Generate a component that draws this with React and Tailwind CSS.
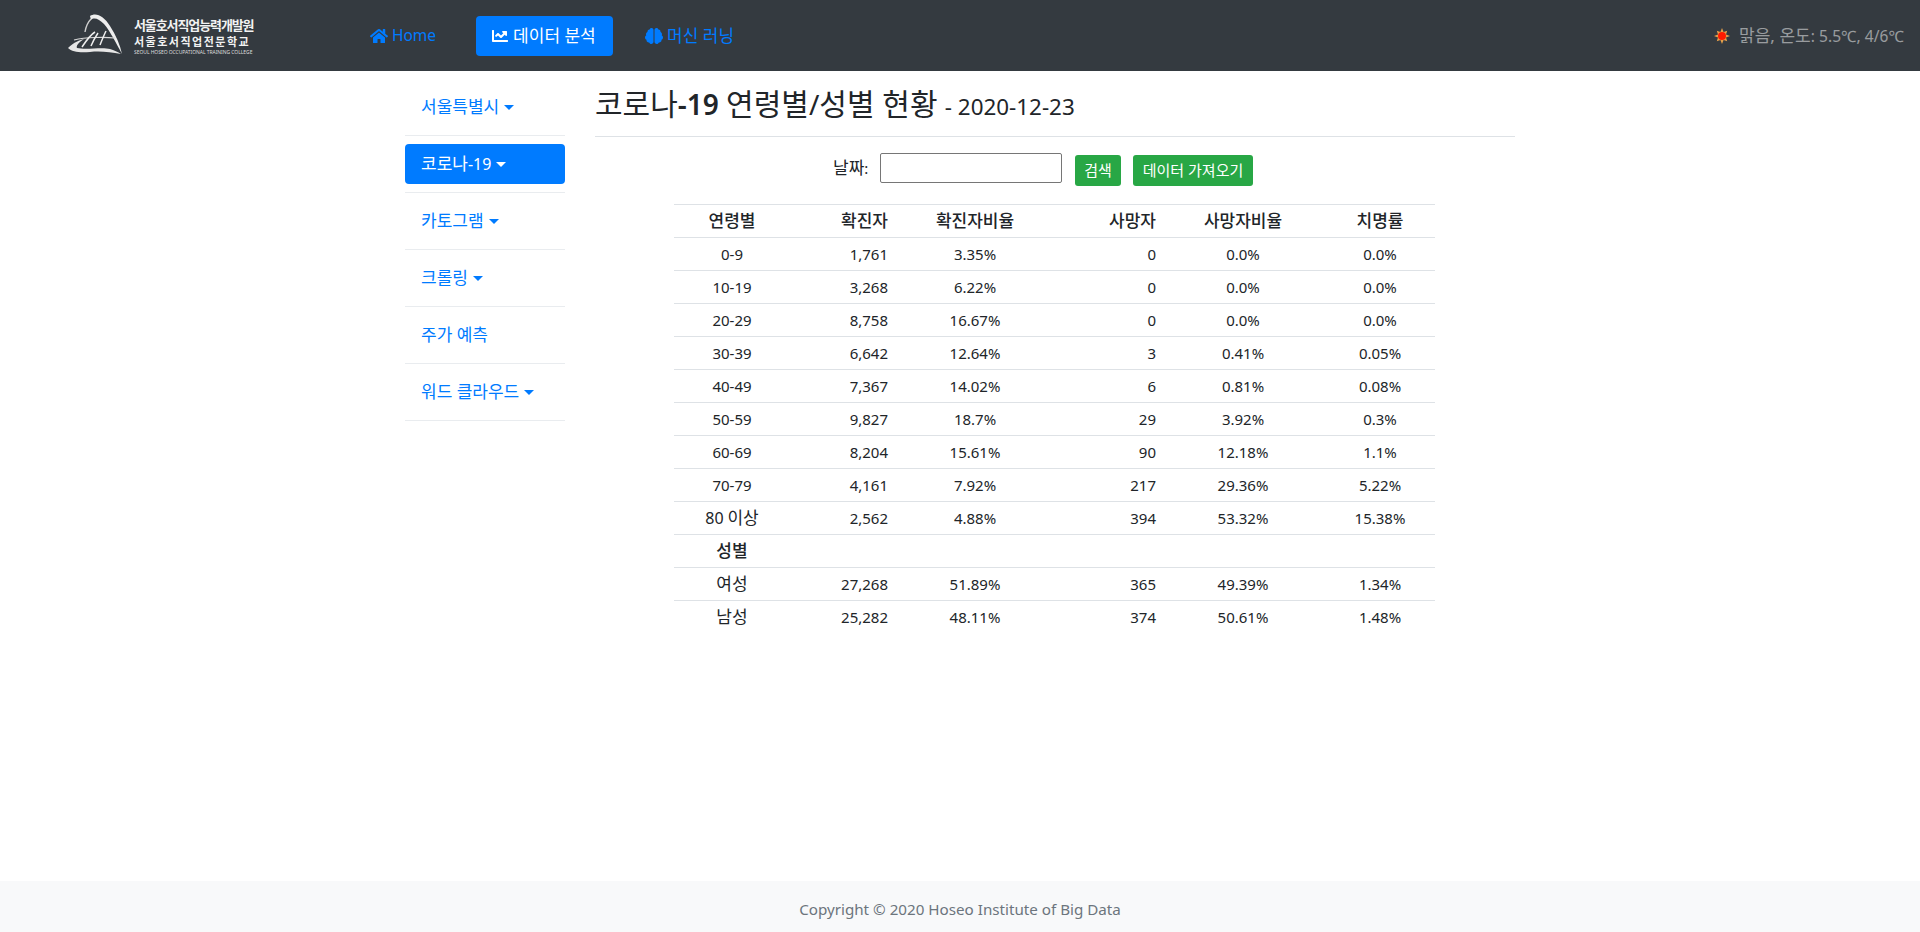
import React from "react";
import { FaHome, FaChartLine, FaBrain } from "react-icons/fa";

function K({ children }) {
  return <span className="text-[17px]">{children}</span>;
}
function L({ children }) {
  return <span className="text-[16px]">{children}</span>;
}

const rows = [
  ["0-9", "1,761", "3.35%", "0", "0.0%", "0.0%"],
  ["10-19", "3,268", "6.22%", "0", "0.0%", "0.0%"],
  ["20-29", "8,758", "16.67%", "0", "0.0%", "0.0%"],
  ["30-39", "6,642", "12.64%", "3", "0.41%", "0.05%"],
  ["40-49", "7,367", "14.02%", "6", "0.81%", "0.08%"],
  ["50-59", "9,827", "18.7%", "29", "3.92%", "0.3%"],
  ["60-69", "8,204", "15.61%", "90", "12.18%", "1.1%"],
  ["70-79", "4,161", "7.92%", "217", "29.36%", "5.22%"],
  [<><L>80</L> <K>이상</K></>, "2,562", "4.88%", "394", "53.32%", "15.38%"],
];
const rows2 = [
  [<K>여성</K>, "27,268", "51.89%", "365", "49.39%", "1.34%"],
  [<K>남성</K>, "25,282", "48.11%", "374", "50.61%", "1.48%"],
];
const side = [
  [<K>서울특별시</K>, true],
  [<><K>코로나</K><L>-19</L></>, true, true],
  [<K>카토그램</K>, true],
  [<K>크롤링</K>, true],
  [<K>주가 예측</K>, false],
  [<K>워드 클라우드</K>, true],
];

const cellBase = "border-t border-[#dee2e6] h-[33px] p-0";

function Row({ r, bold }) {
  return (
    <tr className={bold ? "font-medium" : ""}>
      <td className={cellBase + " text-center"}>{r[0]}</td>
      <td className={cellBase + " text-right pr-[12px]"}>{r[1]}</td>
      <td className={cellBase + " text-center"}>{r[2]}</td>
      <td className={cellBase + " text-right pr-[5px]"}>{r[3]}</td>
      <td className={cellBase + " text-center"}>{r[4]}</td>
      <td className={cellBase + " text-center"}>{r[5]}</td>
    </tr>
  );
}

function Caret() {
  return <span className="inline-block ml-[5px] w-0 h-0 border-t-[5px] border-x-[5px] border-x-transparent border-t-current" />;
}

export default function App() {
  return (
    <div className="min-h-[932px] flex flex-col bg-white text-[#212529] text-[15px] font-['Noto_Sans','Noto_Sans_CJK_KR',sans-serif]">
      <nav className="h-[71px] bg-[#343a40] flex items-center shrink-0">
        <div className="w-[354px] pl-[66px] flex items-center gap-[6px] shrink-0">
          <svg width="62" height="46" viewBox="0 0 62 46" className="shrink-0">
            <path d="M24 3 C30 -1 38 3 44 13 C50 22 54 32 56 41 C50 30 44 18 38 11 C33 6 28 4 25 7 Z" fill="#eeeeee" />
            <path d="M25 6 C22 9 20 13 19 19" stroke="#cfcfcf" strokeWidth="1.4" fill="none" />
            <path d="M8 27 C20 24 40 24 49 25" stroke="#d8d8d8" strokeWidth="1.2" fill="none" />
            <path d="M2 35 C8 29 14 27 18 26 C12 30 10 33 11 35 C20 37 36 34 44 36 C48 37 52 39 55 41 C44 39 34 38 24 39 C14 40 6 39 2 35 Z" fill="#e6e6e6" />
            <path d="M16 34 C20 28 24 22 29 19 M25 33 C27 28 30 23 32 20 M34 32 C36 27 38 22 40 18" stroke="#eeeeee" strokeWidth="1.5" fill="none" />
          </svg>
          <div className="flex flex-col text-[#f2f2f2] font-bold whitespace-nowrap">
            <span className="text-[13px] tracking-[-1.1px] leading-[15px] h-[17px] mt-[2px]">서울호서직업능력개발원</span>
            <span className="text-[11px] tracking-[1.5px] leading-[13px] h-[14px]">서울호서직업전문학교</span>
            <span className="text-[5px] font-normal tracking-[-0.05px] leading-[6px] text-[#dddddd]">SEOUL HOSEO OCCUPATIONAL TRAINING COLLEGE</span>
          </div>
        </div>
        <div className="flex items-center text-[15.5px]">
          <a className="h-[40px] px-[16px] flex items-center gap-[4px] text-[#007bff]"><FaHome size={18} />Home</a>
          <a className="h-[40px] w-[137px] px-[16px] ml-[24px] flex items-center gap-[5px] text-white bg-[#007bff] rounded-[4px] whitespace-nowrap"><FaChartLine size={16} /><K>데이터 분석</K></a>
          <a className="h-[40px] px-[16px] ml-[16px] flex items-center gap-[4px] text-[#007bff] whitespace-nowrap"><FaBrain size={18} /><K>머신 러닝</K></a>
        </div>
        <div className="ml-auto pr-[16px] flex items-center gap-[9px] text-[15.5px] text-[rgba(255,255,255,0.5)]">
          <svg width="16" height="16" viewBox="0 0 20 20">
            <polygon points="10,0 12,5 16.5,3.5 15,8 20,10 15,12 16.5,16.5 12,15 10,20 8,15 3.5,16.5 5,12 0,10 5,8 3.5,3.5 8,5" fill="#e8a04a" />
            <circle cx="10" cy="10" r="5" fill="#ff1a00" />
          </svg>
          <span className="whitespace-nowrap tracking-[0.05px]"><K>맑음, 온도</K>: 5.5℃, 4/6℃</span>
        </div>
      </nav>

      <div className="flex-1 flex pl-[405px]">
        <aside className="w-[160px] shrink-0 pt-[8px]">
          {side.map(([t, c, a], i) => (
            <div key={i} className="border-b border-[#e9ecef] h-[57px] pt-[8px]">
              <a className={"h-[40px] flex items-center px-[16px] rounded-[4px] whitespace-nowrap " + (a ? "bg-[#007bff] text-white" : "text-[#007bff]")}>
                {t}{c && <Caret />}
              </a>
            </div>
          ))}
        </aside>
        <main className="w-[920px] ml-[30px]">
          <h1 className="h-[66px] border-b border-[#dee2e6] text-[28px] leading-[66px] whitespace-nowrap">
            <span className="text-[30px]">코로나</span><span className="font-semibold">-19</span> <span className="text-[30px]">연령별</span>/<span className="text-[30px]">성별 현황</span> <small className="text-[22.4px]">- 2020-12-23</small>
          </h1>
          <div className="flex items-start h-[33px] mt-[16px] pl-[238px]">
            <label className="w-[35px] mr-[12px] h-[30px] flex items-center whitespace-nowrap"><K>날짜</K>:</label>
            <input className="w-[182px] h-[30px] border border-[#767676] rounded-[2px] mr-[13px]" />
            <button className="w-[46px] h-[31px] mt-[2px] bg-[#28a745] text-white text-[15px] rounded-[3px] mr-[12px] whitespace-nowrap">검색</button>
            <button className="w-[120px] h-[31px] mt-[2px] bg-[#28a745] text-white text-[15px] rounded-[3px] whitespace-nowrap">데이터 가져오기</button>
          </div>
          <table className="w-[761px] ml-[79px] mt-[18px] table-fixed border-collapse leading-[20px]">
            <colgroup>
              <col className="w-[116px]" />
              <col className="w-[110px]" />
              <col className="w-[150px]" />
              <col className="w-[111px]" />
              <col className="w-[164px]" />
              <col className="w-[110px]" />
            </colgroup>
            <tbody>
              <Row bold r={[<K>연령별</K>, <K>확진자</K>, <K>확진자비율</K>, <K>사망자</K>, <K>사망자비율</K>, <K>치명률</K>]} />
              {rows.map((r, i) => <Row key={i} r={r} />)}
              <Row bold r={[<K>성별</K>, "", "", "", "", ""]} />
              {rows2.map((r, i) => <Row key={i} r={r} />)}
            </tbody>
          </table>
        </main>
      </div>

      <footer className="h-[51px] pt-[6px] bg-[#f8f9fa] flex items-center justify-center text-[15.2px] text-[#6c757d] shrink-0">
        Copyright © 2020 Hoseo Institute of Big Data
      </footer>
    </div>
  );
}
